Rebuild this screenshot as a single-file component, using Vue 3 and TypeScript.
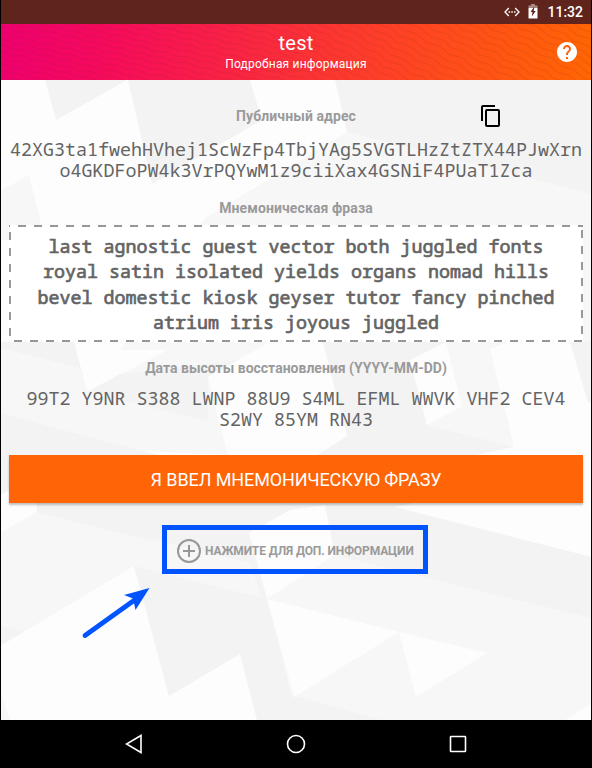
<script setup lang="ts">
interface Facet {
  points: string
  tone: 'dark' | 'mid' | 'light'
}

const facets: Facet[] = [
  { tone: 'dark', points: '45,0 127,0 56,40' },
  { tone: 'dark', points: '128,0 250,0 262,40 152,104' },
  { tone: 'dark', points: '335,0 592,0 592,115 347,52' },
  { tone: 'mid', points: '347,52 592,114 592,270 120,270 205,138' },
  { tone: 'mid', points: '0,111 29,95 45,160 0,160' },
  { tone: 'mid', points: '0,262 74,262 87,312 183,262 270,262 208,297 228,375 143,371 0,333' },
  { tone: 'dark', points: '0,268 80,288 87,312 208,341 208,297 240,280 120,294 87,312 74,262 0,262' },
  { tone: 'dark', points: '0,333 143,371 260,400 592,400 592,538 0,453' },
  { tone: 'light', points: '208,297 270,262 323,262 347,356 316,375 228,375' },
  { tone: 'dark', points: '323,262 490,262 514,367 472,376 316,376 347,356' },
  { tone: 'mid', points: '427,345 460,325 505,335 514,367' },
  { tone: 'light', points: '410,280 446,262 462,326 427,345' },
  { tone: 'mid', points: '446,262 490,262 506,335 462,326' },
  { tone: 'light', points: '490,269 508,262 570,262 588,323 592,320 592,477 408,432 418,400 472,376 514,367' },
  { tone: 'dark', points: '570,262 592,262 592,321 588,323' },
  { tone: 'light', points: '0,415 35,395 37,432 0,453' },
  { tone: 'mid', points: '37,432 250,485 592,538 592,640 0,640 0,453' },
  { tone: 'dark', points: '37,425 325,425 335,475 300,495 267,519 172,494 250,485 37,432' },
  { tone: 'mid', points: '150,459 250,483 262,519 134,487' },
  { tone: 'dark', points: '0,545 26,552 0,567' },
  { tone: 'light', points: '0,566 134,486 169,616 240,574 257,640 10,640 0,610' },
  { tone: 'dark', points: '134,486 267,519 292,617 298,617 382,640 257,640 240,574 169,616' },
  { tone: 'light', points: '249,453 290,430 325,425 335,475 267,519' },
  { tone: 'mid', points: '335,475 592,538 592,618 487,573 267,519' },
  { tone: 'dark', points: '325,425 592,425 592,538 335,475' },
  { tone: 'light', points: '395,427 430,420 592,420 592,477' },
  { tone: 'light', points: '267,519 399,552 294,617' },
  { tone: 'light', points: '399,552 487,573 416,617' },
  { tone: 'light', points: '565,640 592,623 592,640' },
]

const address = [
  '42XG3ta1fwehHVhej1ScWzFp4TbjYAg5SVGTLHzZtZTX44PJwXrn',
  'o4GKDFoPW4k3VrPQYwM1z9ciiXax4GSNiF4PUaT1Zca',
]
const phrase = [
  'last agnostic guest vector both juggled fonts',
  'royal satin isolated yields organs nomad hills',
  'bevel domestic kiosk geyser tutor fancy pinched',
  'atrium iris joyous juggled',
]
const restore = ['99T2 Y9NR S388 LWNP 88U9 S4ML EFML WWVK VHF2 CEV4', 'S2WY 85YM RN43']
</script>

<template>
  <div class="device">
    <div class="status">
      <svg class="ethernet" width="16" height="10" viewBox="0 0 16 10">
        <path d="M4.8 1 1 5l3.8 4M11.2 1 15 5l-3.8 4" fill="none" stroke="#fff" stroke-width="1.3" />
        <path d="M4.6 4.3h1.5v1.5H4.6zM7.3 4.3h1.5v1.5H7.3zM10 4.3h1.5v1.5H10z" fill="#fff" />
      </svg>
      <svg class="battery" width="10" height="15" viewBox="0 0 10 15">
        <path d="M3 0h4v1.5h2.500V4h-9V1.500H3z" fill="#a98984" />
        <path d="M.5 4h9v10.500h-9z" fill="#fff" />
        <path d="M6.300 2.500 2.500 8h2l-.7 4.500L7.700 7h-2z" fill="#5f241c" />
      </svg>
      <span class="clock">11:32</span>
    </div>

    <header class="bar">
      <svg class="waves" width="590" height="56">
        <defs>
          <pattern id="ripple" width="46" height="6" patternUnits="userSpaceOnUse" patternTransform="rotate(13)">
            <path d="M0 3q6-2 12 0t12 0 11 0 11 0" fill="none" stroke="#8c1a28" stroke-width=".8" />
          </pattern>
          <pattern id="weave" width="52" height="7" patternUnits="userSpaceOnUse" patternTransform="rotate(28)">
            <path d="M0 4q7-3 14 0t14 0 12 0 12 0" fill="none" stroke="#8c2a10" stroke-width=".8" />
          </pattern>
        </defs>
        <rect width="300" height="56" fill="url(#ripple)" opacity=".22" />
        <rect x="300" width="290" height="56" fill="url(#weave)" opacity=".22" />
      </svg>
      <div class="titles">
        <h1>test</h1>
        <p>Подробная информация</p>
      </div>
      <svg class="help" width="20" height="20" viewBox="2 2 20 20">
        <path fill="#fff" d="M12 2C6.480 2 2 6.480 2 12s4.480 10 10 10 10-4.480 10-10S17.520 2 12 2zm1 17h-2v-2h2v2zm2.070-7.750-.9.920C13.450 12.900 13 13.500 13 15h-2v-.5c0-1.100.45-2.100 1.170-2.830l1.240-1.260c.37-.36.590-.86.590-1.410 0-1.100-.9-2-2-2s-2 .9-2 2H8c0-2.210 1.790-4 4-4s4 1.790 4 4c0 .88-.36 1.680-.93 2.250z" />
      </svg>
    </header>

    <main class="content">
      <svg class="facets" width="592" height="640" viewBox="0 0 592 640">
        <polygon v-for="(f, i) in facets" :key="i" :points="f.points" :class="f.tone" />
      </svg>

      <div class="label-row">
        <h2>Публичный адрес</h2>
        <svg class="copy" width="20" height="23" viewBox="0 0 20 23">
          <path d="M1 16V2Q1 1 2 1h12" fill="none" stroke="#000" stroke-width="2" />
          <rect x="5" y="5" width="13" height="16" rx="1" fill="none" stroke="#000" stroke-width="2" />
        </svg>
      </div>
      <div class="mono address"><span v-for="l in address" :key="l">{{ l }}</span></div>

      <h2 class="phrase-label">Мнемоническая фраза</h2>
      <div class="phrase">
        <svg class="dashes" width="574" height="117" viewBox="0 0 574 117">
          <path d="M-7 1H574M573 5V117M573 116H0M1 7V117" />
        </svg>
        <div class="mono words"><span v-for="l in phrase" :key="l">{{ l }}</span></div>
      </div>

      <h2 class="restore-label">Дата высоты восстановления (YYYY-MM-DD)</h2>
      <div class="mono restore"><span v-for="l in restore" :key="l">{{ l }}</span></div>

      <button class="confirm">Я ВВЕЛ МНЕМОНИЧЕСКУЮ ФРАЗУ</button>

      <button class="more">
        <svg width="24" height="24" viewBox="0 0 24 24">
          <circle cx="12" cy="12" r="11" />
          <path d="M12 6v12M6 12h12" />
        </svg>
        <span>НАЖМИТЕ ДЛЯ ДОП. ИНФОРМАЦИИ</span>
      </button>

      <svg class="arrow" width="70" height="54" viewBox="0 0 70 54">
        <path d="M5 47.500 56 11" stroke="#0054ff" stroke-width="4.800" stroke-linecap="round" />
        <path d="M69.500 0 44 7 53 10.500 55.500 22z" fill="#0054ff" />
      </svg>
    </main>

    <nav class="nav">
      <svg width="18" height="20" viewBox="0 0 18 20"><path d="M16 1.500v17L1.500 10z" /></svg>
      <svg width="20" height="20" viewBox="0 0 20 20"><circle cx="10" cy="10" r="8.500" /></svg>
      <svg width="18" height="18" viewBox="0 0 18 18"><rect x="1.500" y="1.500" width="15" height="15" rx=".5" /></svg>
    </nav>
  </div>
</template>

<style>
body {
  margin: 0;
  background: #000;
}
</style>

<style scoped>
.device {
  box-sizing: border-box;
  width: 592px;
  height: 768px;
  padding: 0 1px;
  display: flex;
  flex-direction: column;
  background: #000;
  font-family: Roboto, sans-serif;
  overflow: hidden;
}
.status {
  height: 24px;
  box-sizing: border-box;
  padding-right: 8px;
  display: flex;
  align-items: center;
  justify-content: flex-end;
  background: #5f241c;
  color: #fff;
}
.battery {
  margin: 0 9px 2px 8px;
}
.clock {
  font-size: 14px;
  font-weight: 500;
  line-height: 24px;
}
.bar {
  position: relative;
  height: 56px;
  display: grid;
  grid-template-columns: 34px 1fr 34px;
  align-items: center;
  background: linear-gradient(100deg, #ee006f 0%, #f60a5c 18%, #fb2f38 50%, #ff4b1c 75%, #ff6602 100%);
  color: #fff;
}
.waves {
  position: absolute;
  inset: 0;
}
.titles {
  position: relative;
  grid-column: 2;
  padding-top: 1px;
  text-align: center;
}
h1 {
  margin: 0;
  font-size: 20px;
  font-weight: 400;
  line-height: 24px;
  letter-spacing: 0.2px;
}
.titles p {
  margin: 0;
  font-size: 12px;
  line-height: 19px;
  letter-spacing: 0.2px;
}
.help {
  position: relative;
}
.content {
  position: relative;
  height: 640px;
  box-sizing: border-box;
  padding: 22px 8px 0;
  display: flex;
  flex-direction: column;
  align-items: center;
  background: #fdfdfd;
  overflow: hidden;
}
.content > * {
  position: relative;
  flex: none;
}
.content > .facets {
  position: absolute;
  left: -1px;
  top: 0;
}
.facets .dark {
  fill: #f3f3f3;
}
.facets .mid {
  fill: #f7f7f7;
}
.facets .light {
  fill: #fdfdfd;
}
h2 {
  margin: 0;
  font-size: 14px;
  font-weight: 700;
  line-height: 28px;
  letter-spacing: 0.1px;
  color: #9a9a9a;
}
.label-row {
  width: 100%;
  height: 28px;
  display: grid;
  grid-template-columns: 1fr auto 1fr;
  align-items: center;
}
.label-row h2 {
  grid-column: 2;
}
.copy {
  margin-left: 125px;
}
.mono {
  display: flex;
  flex-direction: column;
  align-items: center;
  font-family: 'Droid Sans Mono', 'Noto Sans Mono', 'DejaVu Sans Mono', monospace;
  font-size: 18.330px;
  line-height: 21px;
  color: #646464;
  white-space: pre;
}
.address {
  margin-top: 8px;
}
.phrase-label {
  margin-top: 14px;
}
.phrase {
  width: 574px;
  height: 117px;
  margin-top: 3px;
  box-sizing: border-box;
  padding-top: 8px;
  background: #fff;
}
.dashes {
  position: absolute;
  left: 0;
  top: 0;
}
.dashes path {
  fill: none;
  stroke: #979797;
  stroke-width: 2;
  stroke-dasharray: 8 8;
}
.words {
  line-height: 25.300px;
  -webkit-text-stroke: 0.7px #646464;
}
.restore-label {
  margin-top: 12px;
  letter-spacing: 0;
}
.restore {
  margin-top: 5px;
}
.confirm {
  width: 574px;
  height: 48px;
  margin-top: 26px;
  padding: 2px 0 0;
  border: 0;
  background: #ff6406;
  box-shadow: 0 2px 2px rgba(0, 0, 0, 0.24);
  color: #fff;
  font: 400 18px/46px Roboto, sans-serif;
  letter-spacing: -0.1px;
}
.more {
  width: 266px;
  height: 49px;
  margin: 22px 2px 0 0;
  box-sizing: border-box;
  padding: 2px 0 0 10px;
  display: flex;
  align-items: center;
  gap: 4px;
  border: 5px solid #0054ff;
  background: transparent;
  color: #9a9a9a;
  font: 700 12px/20px Roboto, sans-serif;
  letter-spacing: -0.1px;
  white-space: nowrap;
}
.more svg {
  fill: none;
  stroke: #979797;
  stroke-width: 2;
}
.content > .arrow {
  position: absolute;
  left: 79px;
  top: 508px;
  fill: none;
}
.nav {
  height: 48px;
  display: flex;
  align-items: center;
  justify-content: center;
  gap: 143px;
}
.nav svg {
  fill: none;
  stroke: #fff;
  stroke-width: 1.600;
}
</style>
